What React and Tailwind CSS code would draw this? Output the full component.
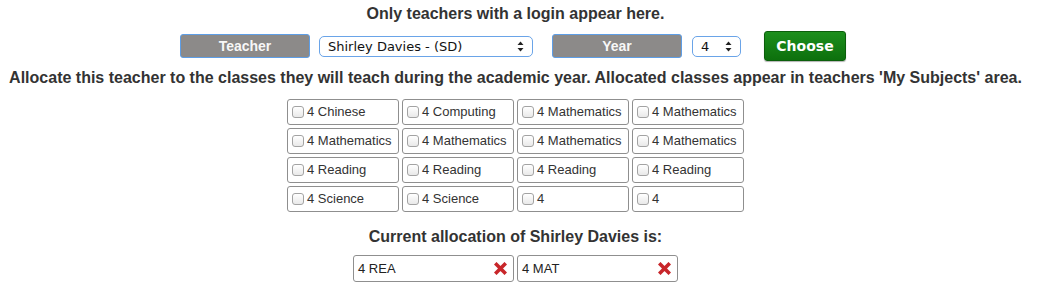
import { useState } from "react"

const classes = [
  "4 Chinese", "4 Computing", "4 Mathematics", "4 Mathematics",
  "4 Mathematics", "4 Mathematics", "4 Mathematics", "4 Mathematics",
  "4 Reading", "4 Reading", "4 Reading", "4 Reading",
  "4 Science", "4 Science", "4", "4",
]

function Arrows() {
  return (
    <svg width="7" height="11" viewBox="0 0 7 11" className="shrink-0">
      <path d="M3.5 0.5 L6.5 4 L0.5 4 Z" fill="#222" />
      <path d="M3.5 10.5 L6.5 7 L0.5 7 Z" fill="#222" />
    </svg>
  )
}

function FakeSelect({ value, className }) {
  return (
    <div
      className={`h-[21px] flex items-center justify-between pl-[8px] pr-[8px] bg-white border border-[#6aa4e8] rounded-[5px] text-[13px] text-[#111] font-['DejaVu_Sans',sans-serif] ${className}`}
    >
      <span className="leading-none">{value}</span>
      <Arrows />
    </div>
  )
}

function Label({ children }) {
  return (
    <div className="w-[130px] h-[24px] flex items-center justify-center bg-[#8c8a89] border border-[#5e9ee6] rounded-[3px] text-white/95 font-bold text-[14px]">
      {children}
    </div>
  )
}

function Cross() {
  return (
    <svg width="13" height="13" viewBox="0 0 13 13">
      <path d="M2.5 2.5 L10.5 10.5 M10.5 2.5 L2.5 10.5" stroke="#c8262a" strokeWidth="3.6" strokeLinecap="square" />
    </svg>
  )
}

export default function App() {
  const [checked, setChecked] = useState({})

  return (
    <div className="w-[1045px] h-[307px] bg-white text-[#333] font-['Liberation_Sans',Arial,sans-serif] pr-[14px]">
      <div className="pt-[4px] text-center font-bold text-[16px] leading-[20px]">
        Only teachers with a login appear here.
      </div>

      <div className="mt-[7px] flex items-center justify-center pr-[5px]">
        <Label>Teacher</Label>
        <FakeSelect value="Shirley Davies - (SD)" className="w-[214px] ml-[9px]" />
        <div className="ml-[19px]">
          <Label>Year</Label>
        </div>
        <FakeSelect value="4" className="w-[49px] ml-[10px]" />
        <button className="ml-[23px] w-[82px] h-[30px] rounded-[3px] bg-gradient-to-b from-[#1c8f1c] to-[#0d700d] border border-[#0b5e0b] text-white font-bold text-[14px] font-['DejaVu_Sans',sans-serif] shadow-[0_1px_1px_rgba(0,0,0,0.3)]">
          Choose
        </button>
      </div>

      <div className="mt-[7px] text-center font-bold text-[16px] leading-[20px]">
        Allocate this teacher to the classes they will teach during the academic year. Allocated classes appear in teachers 'My Subjects' area.
      </div>

      <div className="mt-[11px] flex justify-center">
        <div className="grid grid-cols-[repeat(4,112px)] gap-[3px]">
          {classes.map((c, i) => (
            <label
              key={i}
              className="h-[26px] flex items-center gap-[3px] pl-[4px] border border-[#8f8f8f] rounded-[3px] text-[13px] cursor-pointer"
            >
              <span
                onClick={() => setChecked({ ...checked, [i]: !checked[i] })}
                className="w-[12px] h-[12px] rounded-[3px] border border-[#a3a3a3] bg-gradient-to-b from-white to-[#e9e9e9] flex items-center justify-center text-[9px] leading-none"
              >
                {checked[i] ? "✓" : ""}
              </span>
              <span>{c}</span>
            </label>
          ))}
        </div>
      </div>

      <div className="mt-[15px] text-center font-bold text-[16px] leading-[20px]">
        Current allocation of Shirley Davies is:
      </div>

      <div className="mt-[8px] flex justify-center gap-[3px]">
        {["4 REA", "4 MAT"].map((a) => (
          <div
            key={a}
            className="w-[161px] h-[27px] flex items-center justify-between pl-[4px] pr-[6px] border border-[#8f8f8f] rounded-[3px] text-[13px] text-[#222]"
          >
            <span>{a}</span>
            <Cross />
          </div>
        ))}
      </div>
    </div>
  )
}
